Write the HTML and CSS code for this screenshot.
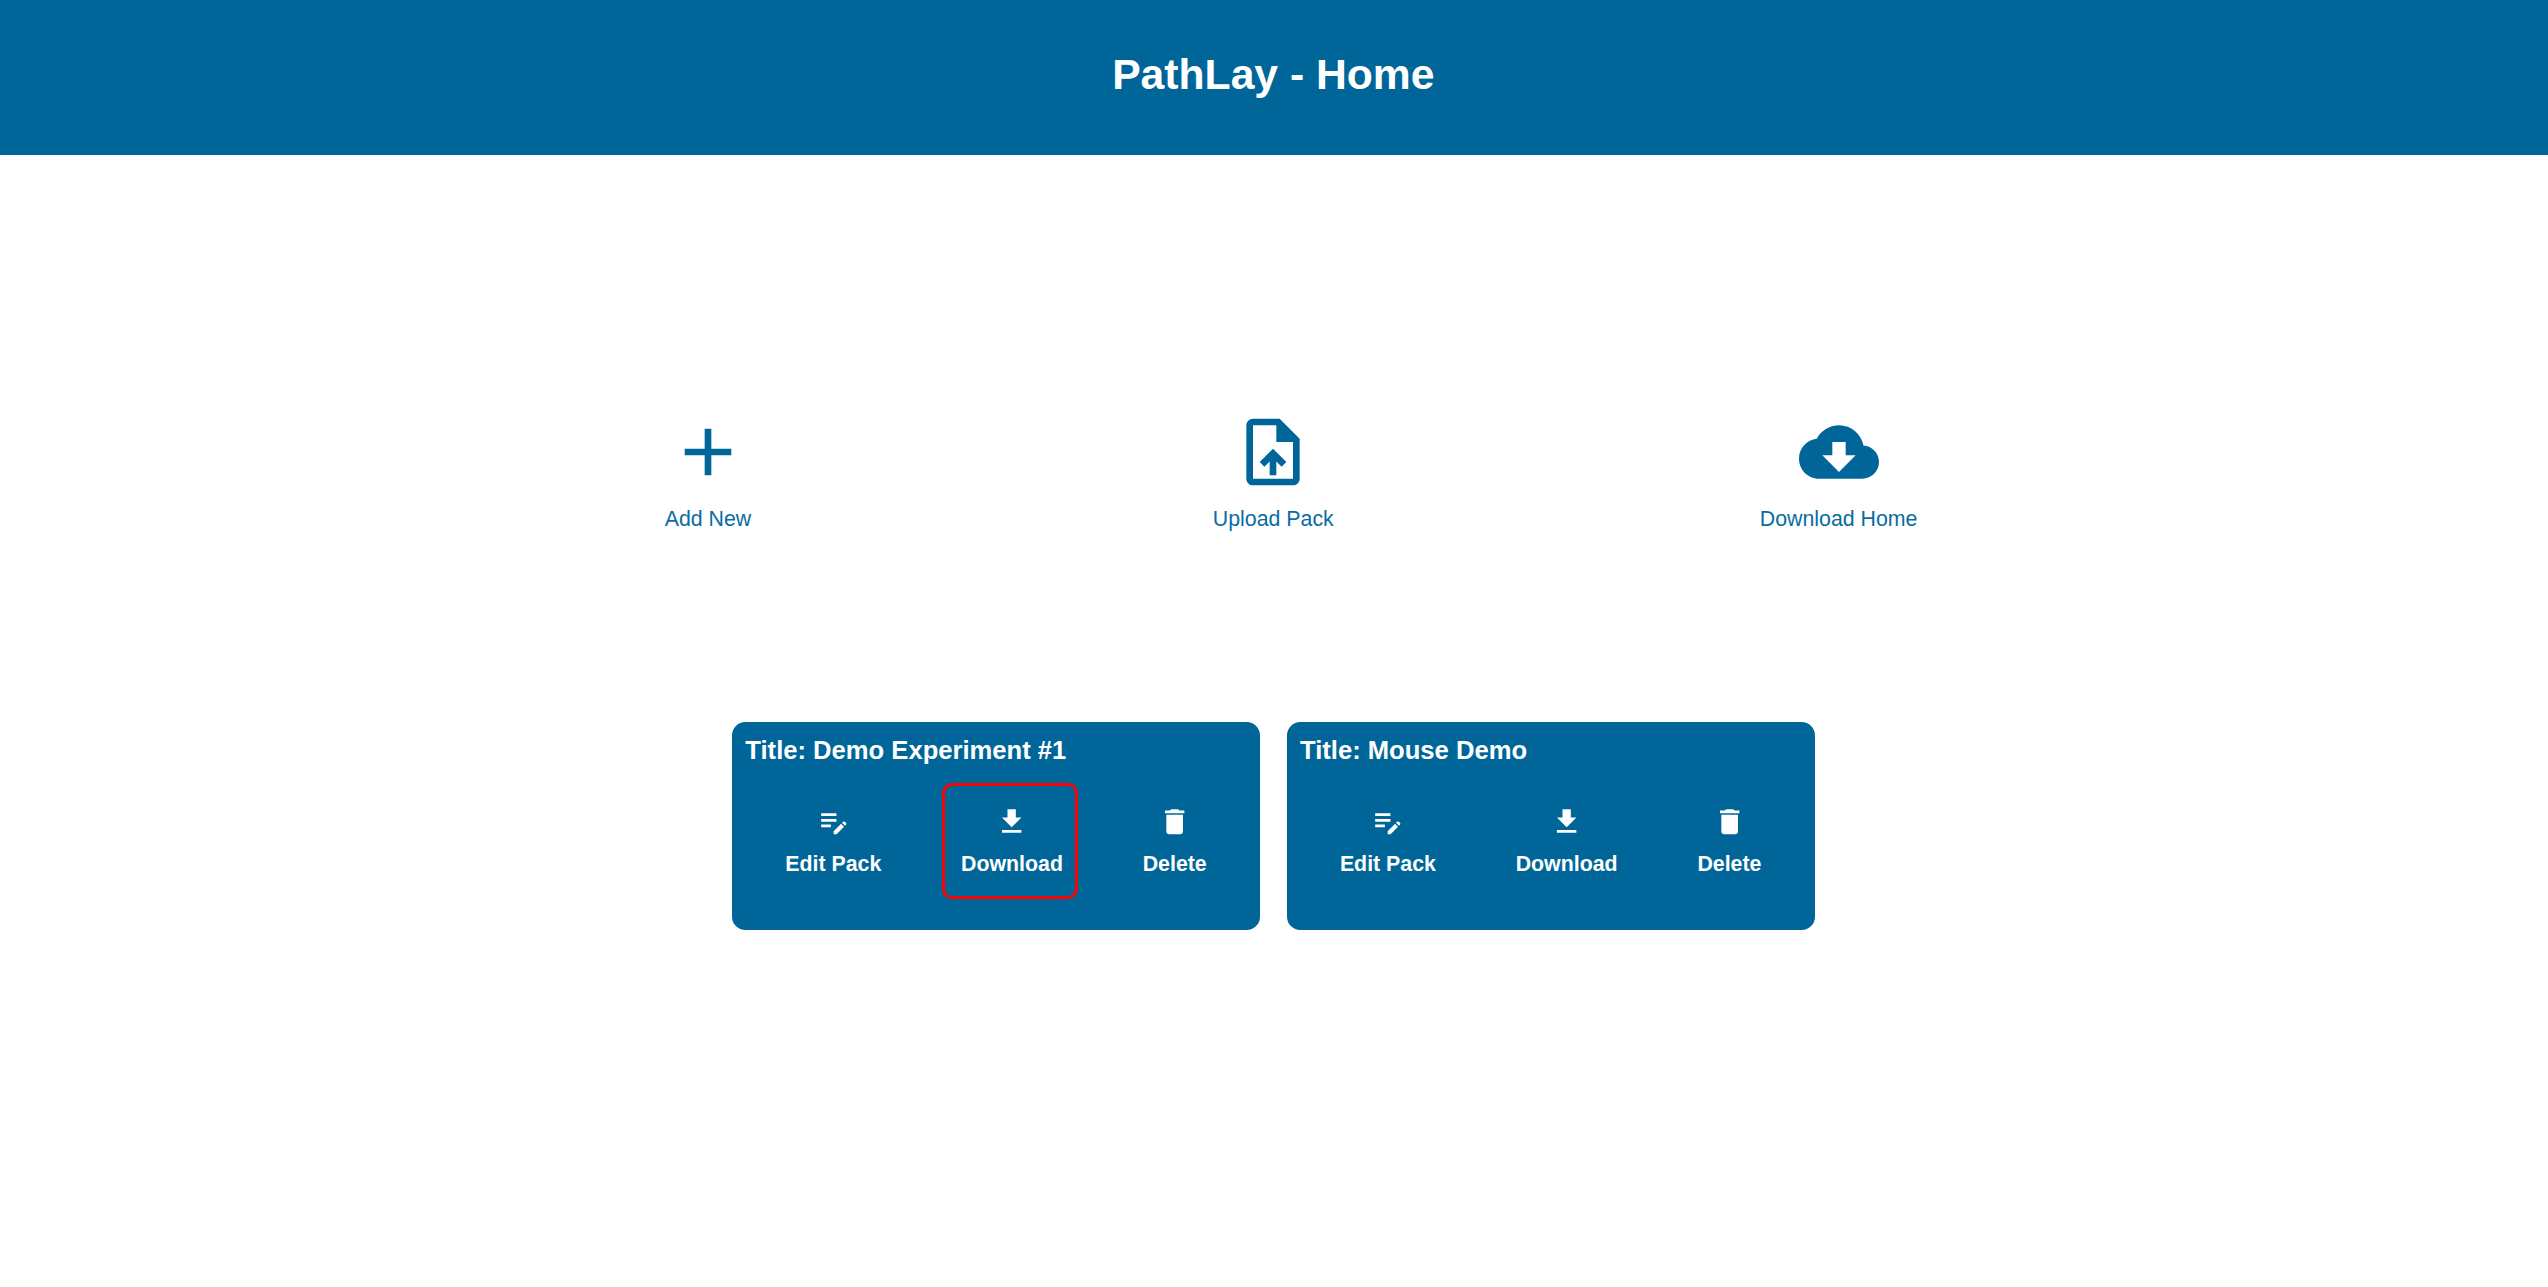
FILE: index.html
```html
<!DOCTYPE html>
<html lang="en">
<head>
<meta charset="utf-8">
<title>PathLay - Home</title>
<link rel="stylesheet" href="styles.css">
</head>
<body>
<svg class="sprite" aria-hidden="true">
  <symbol id="edit" viewBox="0 0 24 24"><path d="M3 10h11v2H3v-2zm0-2h11V6H3v2zm0 8h7v-2H3v2zm15.01-3.13.71-.71c.39-.39 1.02-.39 1.41 0l.71.71c.39.39.39 1.02 0 1.41l-.71.71-2.12-2.12zm-.71.71-5.3 5.3V21h2.12l5.3-5.3-2.12-2.12z"/></symbol>
  <symbol id="download" viewBox="0 0 24 24"><path d="M19 9h-4V3H9v6H5l7 7 7-7zM5 18v2h14v-2H5z"/></symbol>
  <symbol id="delete" viewBox="0 0 24 24"><path d="M6 19c0 1.100.9 2 2 2h8c1.100 0 2-.9 2-2V7H6v12zM19 4h-3.500l-1-1h-5l-1 1H5v2h14V4z"/></symbol>
</svg>
<header class="header"><h1 class="header-title">PathLay - Home</h1></header>
<main class="content">
  <nav class="actions">
    <a class="action">
      <svg class="action-icon" viewBox="0 0 24 24"><path d="M19 13h-6v6h-2v-6H5v-2h6V5h2v6h6v2z"/></svg>
      <span>Add New</span>
    </a>
    <a class="action">
      <svg class="action-icon" viewBox="0 0 24 24"><path d="M14 2H6c-1.100 0-1.990.9-1.990 2L4 20c0 1.100.89 2 1.990 2H18c1.100 0 2-.9 2-2V8l-6-6zm4 18H6V4h7v5h5v11zM8 15.010l1.410 1.410L11 14.840V19h2v-4.160l1.590 1.590L16 15.010 12.010 11 8 15.010z"/></svg>
      <span>Upload Pack</span>
    </a>
    <a class="action">
      <svg class="action-icon" viewBox="0 0 24 24"><path d="M19.350 10.040C18.670 6.590 15.640 4 12 4 9.110 4 6.600 5.640 5.350 8.040 2.340 8.360 0 10.910 0 14c0 3.310 2.690 6 6 6h13c2.760 0 5-2.240 5-5 0-2.640-2.050-4.780-4.650-4.960zM17 13l-5 5-5-5h3V9h4v4h3z"/></svg>
      <span>Download Home</span>
    </a>
  </nav>
  <section class="packs">
    <article class="pack">
      <h3 class="pack-title">Title: Demo Experiment #1</h3>
      <div class="pack-tools">
        <a class="tool"><svg class="tool-icon"><use href="#edit"/></svg><span>Edit Pack</span></a>
        <a class="tool highlighted"><svg class="tool-icon"><use href="#download"/></svg><span>Download</span></a>
        <a class="tool"><svg class="tool-icon"><use href="#delete"/></svg><span>Delete</span></a>
      </div>
    </article>
    <article class="pack">
      <h3 class="pack-title">Title: Mouse Demo</h3>
      <div class="pack-tools">
        <a class="tool"><svg class="tool-icon"><use href="#edit"/></svg><span>Edit Pack</span></a>
        <a class="tool"><svg class="tool-icon"><use href="#download"/></svg><span>Download</span></a>
        <a class="tool"><svg class="tool-icon"><use href="#delete"/></svg><span>Delete</span></a>
      </div>
    </article>
  </section>
</main>
</body>
</html>
```
FILE: styles.css
```css
*,
*::after { box-sizing: border-box; }

body {
  margin: 0;
  background: #fff;
  font-family: "Liberation Sans", Arial, sans-serif;
  font-size: 21.333px;
  color: #069;
}

.sprite { display: none; }

svg { fill: currentColor; flex-shrink: 0; }

.header {
  height: 154.667px;
  padding-top: 50px;
  background: #069;
  color: #fff;
  text-align: center;
}

.header-title {
  width: 2546.667px;
  margin: 0;
  font-size: 42.667px;
  line-height: 49px;
}

.content {
  width: 2546.667px;
  display: flex;
  flex-direction: column;
  align-items: center;
}

.actions {
  display: grid;
  grid-template-columns: repeat(3, 1fr);
  width: 1696px;
  height: 310px;
  margin-top: 257px;
}

.action,
.tool {
  display: flex;
  flex-direction: column;
  align-items: center;
  line-height: 25px;
}

.action { gap: 15px; }

.action span { color: #0a6ca2; }

.action-icon { width: 80px; height: 80px; }

.packs { display: flex; gap: 26.667px; }

.pack {
  width: 528px;
  height: 208px;
  padding: 13.333px;
  border-radius: 13.333px;
  background: #069;
  color: #fff;
}

.pack-title {
  margin: 0;
  font-size: 25.6px;
  line-height: 30px;
}

.pack-tools {
  display: flex;
  justify-content: space-around;
  margin-top: 40px;
  font-weight: bold;
}

.tool { position: relative; gap: 14px; }

.tool-icon { width: 33.333px; height: 33.333px; }

.highlighted::after {
  content: "";
  position: absolute;
  left: -19px;
  top: -22px;
  width: 136.333px;
  height: 116px;
  border: 3px solid #f00;
  border-radius: 10px;
}
```
